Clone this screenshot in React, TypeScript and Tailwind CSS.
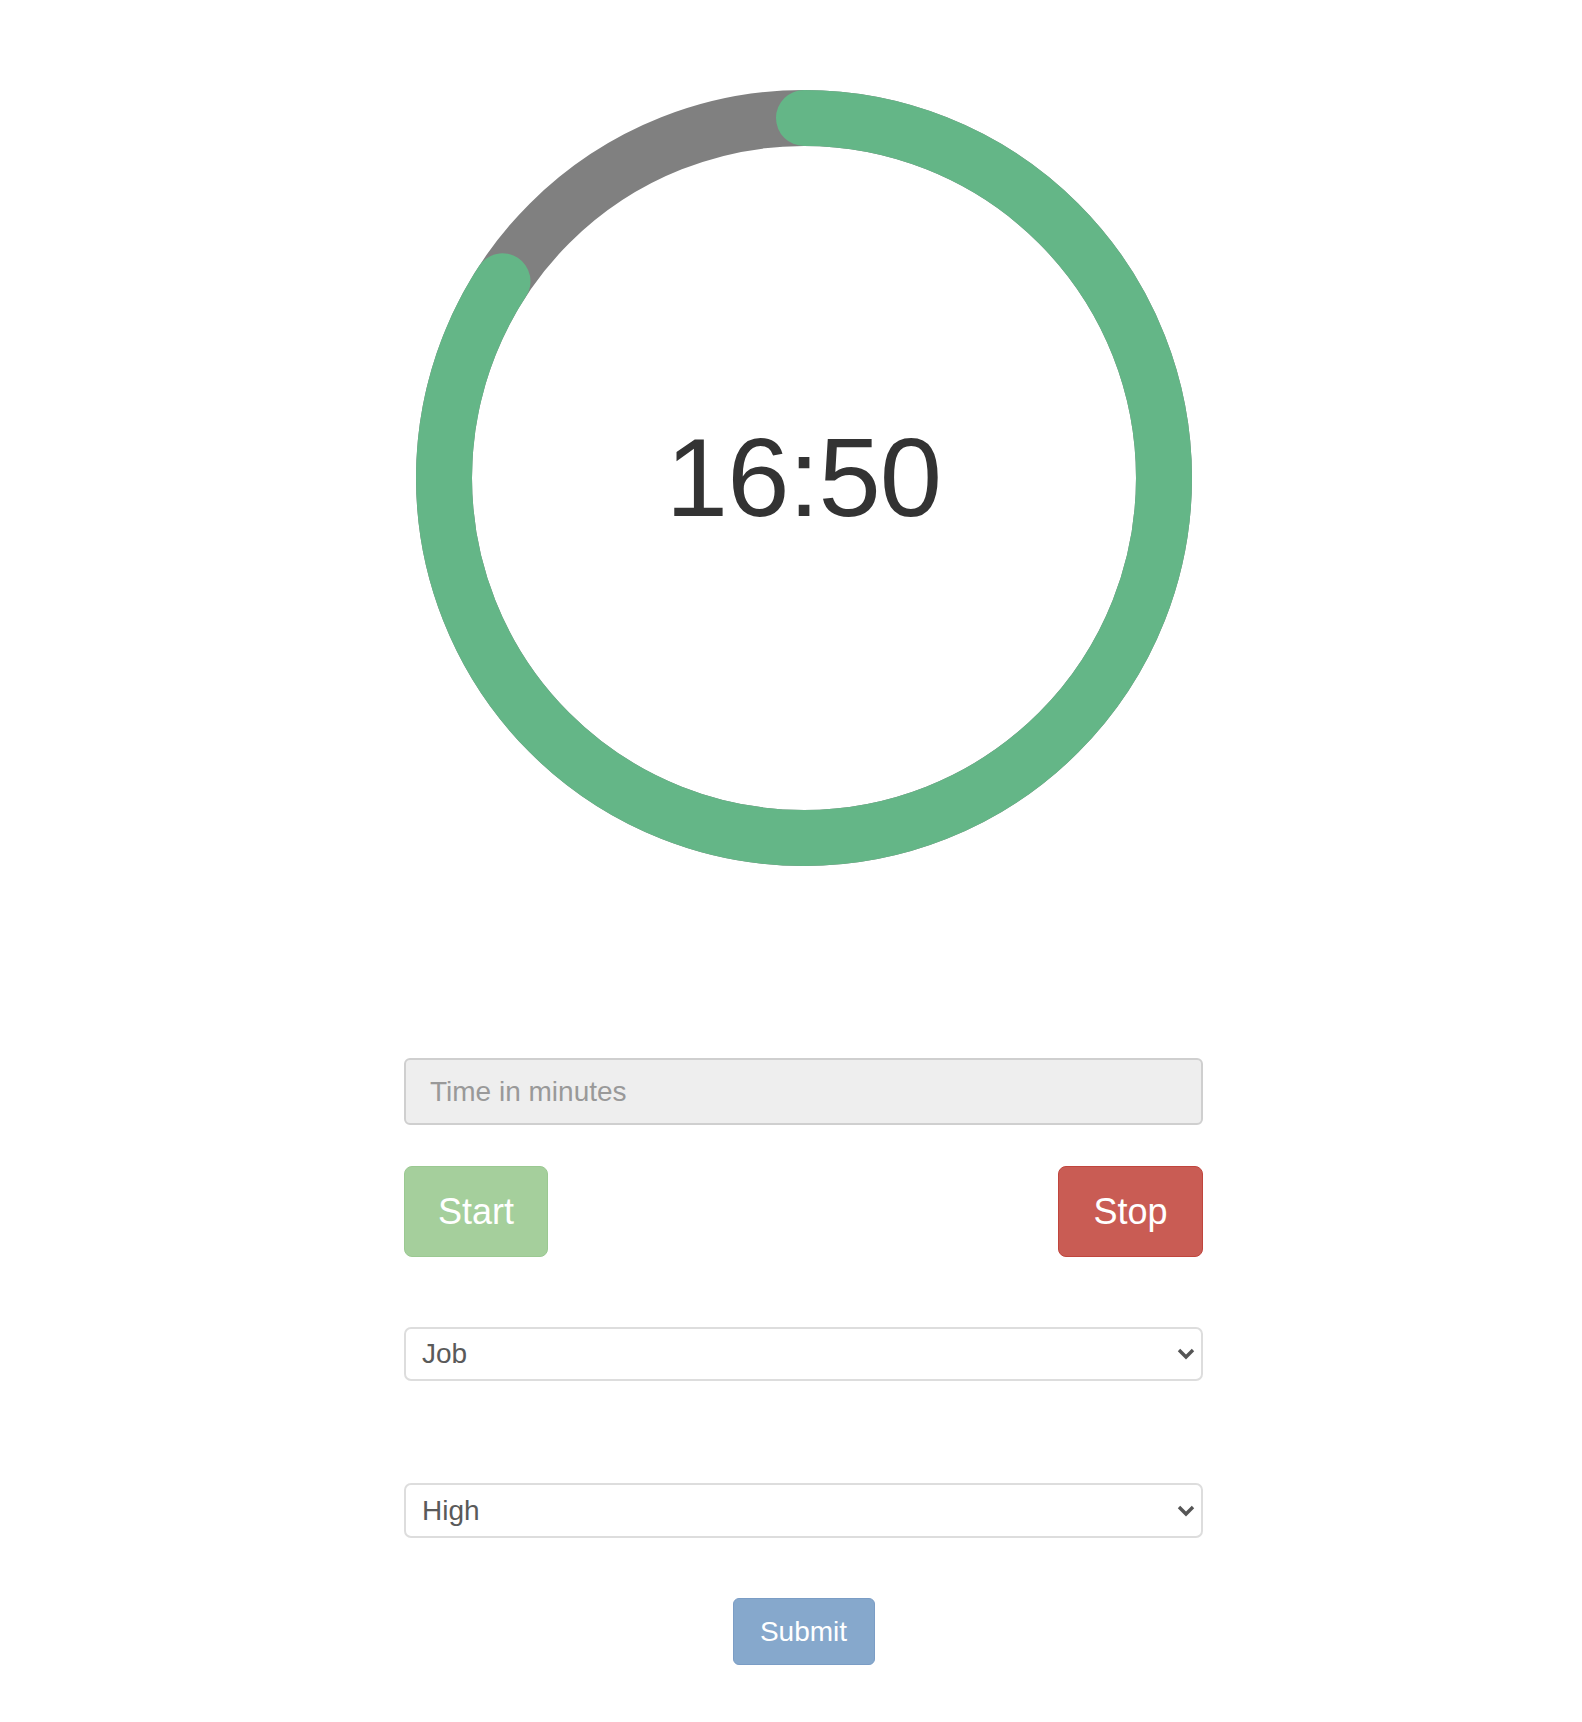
import { useState } from 'react'

const R = 360
const C = 2 * Math.PI * R

function Ring({ left, total }: { left: number; total: number }) {
  const done = (left / total) * C
  const mm = Math.floor(left / 60)
  const ss = String(left % 60).padStart(2, '0')
  return (
    <div className="relative mx-auto h-[776px] w-[776px]">
      <svg width="776" height="776" viewBox="0 0 776 776">
        <circle cx="388" cy="388" r={R} fill="none" stroke="#808080" strokeWidth="56" />
        <circle
          cx="388"
          cy="388"
          r={R}
          fill="none"
          stroke="#64b687"
          strokeWidth="56"
          strokeLinecap="round"
          strokeDasharray={`${done} ${C}`}
          transform="rotate(-90 388 388)"
        />
      </svg>
      <div className="absolute inset-0 flex items-center justify-center">
        <span className="text-[112px] leading-none text-[#333] tracking-[-1px]">
          {mm}:{ss}
        </span>
      </div>
    </div>
  )
}

function Chevron() {
  return (
    <svg
      className="pointer-events-none absolute right-[8px] top-1/2 -translate-y-1/2"
      width="18"
      height="12"
      viewBox="0 0 18 12"
    >
      <path d="M2 2 L9 9 L16 2" fill="none" stroke="#555" strokeWidth="3.4" strokeLinejoin="miter" />
    </svg>
  )
}

export default function App() {
  const [minutes, setMinutes] = useState('')
  const [job, setJob] = useState('Job')
  const [prio, setPrio] = useState('High')

  return (
    <div
      className="min-h-[1722px] bg-white"
      style={{ fontFamily: '"Liberation Sans", Arial, Helvetica, sans-serif' }}
    >
      <div className="ml-[404px] w-[799px] pt-[90px]">
        <Ring left={1010} total={1200} />

        <input
          value={minutes}
          onChange={(e) => setMinutes(e.target.value)}
          placeholder="Time in minutes"
          className="mt-[192px] block h-[67px] w-full rounded-[6px] border-2 border-[#cfcfcf] bg-[#eeeeee] pl-[24px] text-[28px] text-[#555] placeholder:text-[#999] outline-none"
        />

        <div className="mt-[41px] flex justify-between">
          <button className="h-[91px] w-[144px] rounded-[8px] border border-[#9bc992] bg-[#a5cf9c] text-[36px] text-white">
            Start
          </button>
          <button className="h-[91px] w-[145px] rounded-[8px] border border-[#c0453d] bg-[#c95c54] text-[36px] text-white">
            Stop
          </button>
        </div>

        <div className="relative mt-[70px]">
          <select
            value={job}
            onChange={(e) => setJob(e.target.value)}
            className="block h-[54px] w-full appearance-none rounded-[7px] border-2 border-[#dddddd] bg-white pl-[16px] text-[28px] text-[#5a5a5a] outline-none"
          >
            <option>Job</option>
            <option>Study</option>
            <option>Personal</option>
          </select>
          <Chevron />
        </div>

        <div className="relative mt-[102px]">
          <select
            value={prio}
            onChange={(e) => setPrio(e.target.value)}
            className="block h-[55px] w-full appearance-none rounded-[7px] border-2 border-[#dddddd] bg-white pl-[16px] text-[28px] text-[#5a5a5a] outline-none"
          >
            <option>High</option>
            <option>Medium</option>
            <option>Low</option>
          </select>
          <Chevron />
        </div>

        <div className="mt-[60px] flex justify-center">
          <button className="h-[67px] w-[142px] rounded-[6px] border border-[#7b9dc5] bg-[#86a8cc] text-[28px] text-white">
            Submit
          </button>
        </div>
      </div>
    </div>
  )
}
